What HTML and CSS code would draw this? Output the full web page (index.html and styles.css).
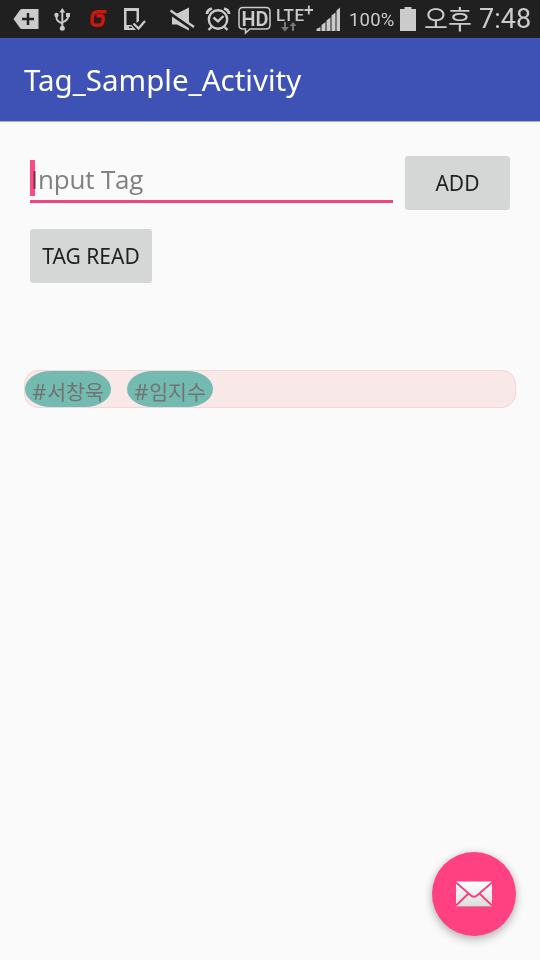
FILE: index.html
```html
<!DOCTYPE html>
<html lang="ko">
<head>
<meta charset="utf-8">
<title>Tag_Sample_Activity</title>
<link rel="stylesheet" href="styles.css">
</head>
<body>
<header class="status">
  <svg class="icon" width="48" height="38" viewBox="0 0 48 38"><path fill="#cbcbcb" d="M13.500 19 20 10q.5-1 2-1h16.500v20H22q-1.500 0-2-1z"/><path d="M22 19h12M28 13v12" stroke="#202020" stroke-width="2.500"/></svg>
  <svg class="icon" width="32" height="38" viewBox="48 0 32 38"><g fill="none" stroke="#cbcbcb" stroke-width="1.900"><path d="M62.300 11v17M56.500 15v3q0 3 5.800 5.500M68 15v2q0 3-5.700 5.500"/></g><path fill="#cbcbcb" d="m62.300 8 3 4.500h-6zM66 13h4v4h-4z"/><circle cx="56.500" cy="15" r="2.200" fill="#cbcbcb"/><circle cx="62.300" cy="28.300" r="2.500" fill="#cbcbcb"/></svg>
  <svg class="icon" width="36" height="38" viewBox="80 0 36 38"><path fill="none" stroke="#cf150d" stroke-width="3.400" d="M106.500 11.800H98q-5 0-5.500 4.500l-.400 4.500q-.300 4.500 3.900 4.500h2.500q4 0 4.500-4l.300-2.500q.200-3-2.300-3h-4.500"/></svg>
  <svg class="icon" width="44" height="38" viewBox="116 0 44 38"><path fill="#cbcbcb" fill-rule="evenodd" d="M124 8h15v13l-2.500 2V11h-10v14h5l4.500 5H124zM129 26.500v1.500h3.500l-1.500-1.500z"/><path d="m133.500 23.500 5 5 6.500-7.500" fill="none" stroke="#cbcbcb" stroke-width="2.300"/></svg>
  <svg class="icon" width="40" height="38" viewBox="160 0 40 38"><path fill="#cbcbcb" d="M172 13.500h5l12-6v23l-12-6h-5z"/><path d="m169.500 13 24 16.500" stroke="#202020" stroke-width="3"/><path d="m170.500 10.500 23.500 16.500" stroke="#cbcbcb" stroke-width="2.300"/></svg>
  <svg class="icon" width="36" height="38" viewBox="200 0 36 38"><g fill="none" stroke="#cbcbcb" stroke-width="2.400"><circle cx="218" cy="19.500" r="9.200"/><path d="m213.500 17.500 4.500 3.800 5.500-5.300M211.500 27l-3 3M224.500 27l3 3"/><path d="M207 14q0-4 5-5.500M229 14q0-4-5-5.500" stroke-width="2.800"/></g></svg>
  <svg class="icon" width="38" height="38" viewBox="236 0 38 38"><path d="M243 7.500h23q4 0 4 4V25q0 4-4 4h-16l-4.500 4v-4H243q-4 0-4-4V11.500q0-4 4-4z" fill="none" stroke="#cbcbcb" stroke-width="1.500"/><text class="hd" x="241.500" y="25.500" textLength="27" lengthAdjust="spacingAndGlyphs">HD</text></svg>
  <svg class="icon" width="42" height="38" viewBox="274 0 42 38"><text class="lte" x="276" y="20.500" textLength="28" lengthAdjust="spacing">LTE</text><path d="M304.500 10h8.500M308.800 5.500v9" stroke="#cbcbcb" stroke-width="1.800"/><path d="M286 22v5h3l-4 4.500-4-4.500h3v-5zM292 31v-5h-2.500l3.500-4 3.500 4H294v5z" fill="#777"/></svg>
  <svg class="icon" width="30" height="38" viewBox="316 0 30 38"><path fill="#cbcbcb" d="M316.500 31v-2l4-2v4zM321.500 31v-6l4-3v9zM326.500 31V20.500l4-3V31zM331.500 31V15.500l4-3V31zM336.500 31V10.500L340 7.500V31z"/></svg>
  <span class="percent">100%</span>
  <svg class="icon" width="22" height="38" viewBox="396 0 22 38"><path fill="#cbcbcb" d="M400 9h4.500V7h7v2h4.500v22h-16z"/></svg>
  <span class="ampm">오후</span><span class="clock">7:48</span>
</header>
<div class="toolbar"><h1 class="title">Tag_Sample_Activity</h1></div>
<main class="content">
  <div class="row">
    <div class="field"><span class="hint">Input Tag</span><span class="cursor"></span></div>
    <button class="btn add"><span>ADD</span></button>
  </div>
  <button class="btn read"><span>TAG READ</span></button>
  <div class="tags"><span class="tag"><span class="hash">#</span>서창욱</span><span class="tag"><span class="hash">#</span>임지수</span></div>
</main>
<button class="fab" aria-label="mail">
  <svg width="36" height="26" viewBox="0 0 36 26"><defs><linearGradient id="paper" x2="0" y2="1"><stop stop-color="#fff"/><stop offset="1" stop-color="#dcdcdc"/></linearGradient></defs><rect y=".5" width="36" height="25" rx="1" fill="url(#paper)"/><path d="m0 1.500 15 13q3 2.500 6 0l15-13M0 24.500l12.500-12M36 24.500l-12.500-12" fill="none" stroke="#f3407f" stroke-width="1.900"/><path d="M1 25.500h34" stroke="#b0949c" stroke-width=".8"/></svg>
</button>
</body>
</html>
```
FILE: styles.css
```css
* { box-sizing: border-box; }
body { margin: 0; width: 540px; height: 960px; overflow: hidden; background: #fafafa; font-family: "Noto Sans", "Noto Sans CJK KR", sans-serif; }
button { border: 0; padding: 0; font-family: inherit; }
.status { display: flex; height: 38px; background: #202020; color: #cbcbcb; font-family: Roboto, "Noto Sans CJK KR", sans-serif; white-space: nowrap; }
.icon { flex: none; display: block; }
.hd { font: 600 20px Roboto, sans-serif; fill: #cbcbcb; }
.lte { font: 500 17px Roboto, sans-serif; fill: #cbcbcb; }
.percent { width: 47px; margin-left: 3px; font-size: 18.500px; letter-spacing: .2px; line-height: 40px; }
.ampm { width: 55px; margin-left: 6px; font: 400 26px/36px "Noto Sans CJK KR", sans-serif; }
.clock { font-size: 27px; line-height: 39px; }
.toolbar { display: flex; align-items: center; height: 84px; padding: 0 24px; background: #3e51b4; border-bottom: 1px solid #a5abd0; }
.title { margin: 0; font-size: 29.500px; font-weight: 400; line-height: 40px; color: #fff; }
.content { padding: 33px 24px 0; }
.row { display: flex; gap: 12px; padding: 0 6px; }
.field { display: flex; position: relative; width: 363px; height: 48px; padding: 4px 0 0 1px; border-bottom: 3px solid #ef4580; }
.cursor { position: absolute; left: 0; top: 5px; width: 5px; height: 36px; background: rgba(255,30,110,.8); mix-blend-mode: multiply; }
.hint { font-family: "Open Sans", sans-serif; font-size: 26px; line-height: 40px; letter-spacing: -.2px; color: #808080; }
.btn { display: flex; justify-content: center; align-items: center; height: 54px; margin-top: 1px; border-radius: 3px; background: #d5d7d6; color: #202221; font-size: 21px; line-height: 30px; white-space: nowrap; }
.add { width: 105px; }
.read { width: 122px; margin: 19px 0 0 6px; }
.tags { display: flex; gap: 16px; height: 38px; margin-top: 87px; border: 1px solid #f6d5d6; border-radius: 14px; background: #f9e8e8; }
.tag { display: flex; justify-content: center; width: 86px; height: 36px; border-radius: 26px / 18px; background: #73bbb1; color: #727272; font: 400 20.500px/40px "Noto Sans CJK KR", sans-serif; white-space: nowrap; }
.hash { width: 15px; font-family: "Noto Sans", sans-serif; font-size: 22px; }
.fab { position: fixed; left: 432px; top: 852px; display: flex; align-items: center; justify-content: center; width: 84px; height: 84px; border-radius: 50%; background: #ff4081; box-shadow: 0 4px 10px rgba(0,0,0,.24), 0 0 8px rgba(0,0,0,.1); }
```
